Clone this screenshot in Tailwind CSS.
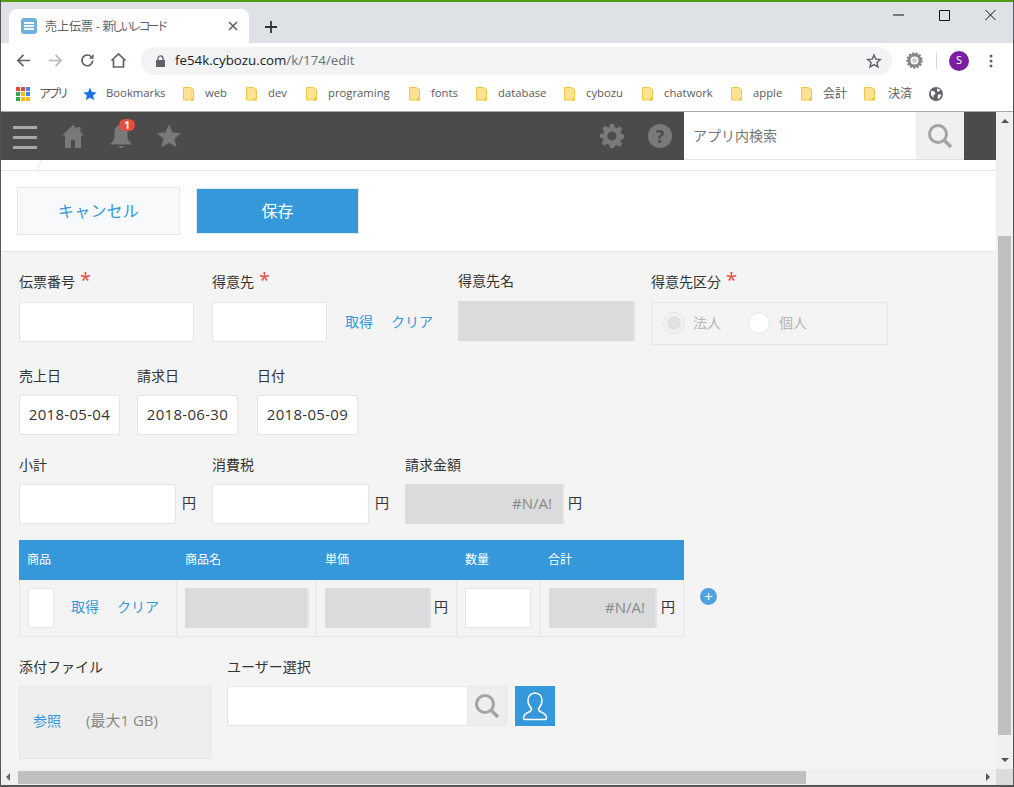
<!DOCTYPE html>
<html lang="ja">
<head>
    <meta charset="UTF-8">
    <title>売上伝票 - 新しいレコード</title>
    <script src="https://cdn.jsdelivr.net/npm/@tailwindcss/browser@4"></script>
</head>
<body class="w-[1014px] h-[787px] overflow-hidden flex flex-col bg-white text-[14px] text-[#333] font-['Open_Sans','Noto_Sans_CJK_JP',sans-serif] border-l border-r border-[#555]">
    <!-- Window title + tabs -->
    <div class="h-[43px] shrink-0 bg-[#dee1e6] border-t-2 border-[#4f9a10] flex items-end relative">
        <div class="ml-[8px] w-[240px] h-[34px] bg-white rounded-t-[8px] flex items-center pl-[12px] pr-[11px]">
            <div class="w-[16px] h-[16px] rounded-[3px] bg-[#6fb1de] flex flex-col justify-center gap-[1px] px-[3px]">
                <div class="h-[2px] bg-white/90"></div>
                <div class="h-[2px] bg-white/90"></div>
                <div class="h-[2px] bg-white/90"></div>
            </div>
            <span class="ml-[8px] text-[12px] text-[#5f5f5f] font-['Noto_Sans_CJK_JP',sans-serif]">売上伝票 - <span class="tracking-[-3px]">新しいレコード</span></span>
            <svg class="ml-auto w-[10px] h-[10px]" viewBox="0 0 10 10"><path d="M1 1l8 8M9 1l-8 8" stroke="#5f6368" stroke-width="1.6"/></svg>
        </div>
        <svg class="ml-[15px] mb-[9px] w-[14px] h-[14px]" viewBox="0 0 14 14"><path d="M7 1v12M1 7h12" stroke="#333" stroke-width="1.8"/></svg>
        <div class="ml-auto self-start mt-[5px] mr-[17px] flex items-center gap-[35px]">
            <svg class="w-[11px] h-[16px]" viewBox="0 0 11 16"><path d="M0 8h11" stroke="#111" stroke-width="1"/></svg>
            <svg class="w-[11px] h-[16px]" viewBox="0 0 11 16"><path d="M.5 3.5h10v10H.5z" fill="none" stroke="#111" stroke-width="1"/></svg>
            <svg class="w-[11px] h-[16px]" viewBox="0 0 11 16"><path d="M.5 3l10 10M10.5 3l-10 10" stroke="#111" stroke-width="1"/></svg>
        </div>
    </div>

    <!-- Address bar -->
    <div class="h-[35px] shrink-0 bg-white flex items-center pl-[15px]">
        <svg class="w-[15px] h-[15px]" viewBox="0 0 16 16"><path d="M15 8H2M8 2L2 8l6 6" fill="none" stroke="#5f6368" stroke-width="1.8"/></svg>
        <svg class="ml-[17px] w-[15px] h-[15px]" viewBox="0 0 16 16"><path d="M1 8h13M8 2l6 6-6 6" fill="none" stroke="#b5b8bc" stroke-width="1.8"/></svg>
        <svg class="ml-[17px] w-[15px] h-[15px]" viewBox="0 0 16 16"><path d="M13.5 8A5.7 5.7 0 1 1 12 4" fill="none" stroke="#5f6368" stroke-width="1.8"/><path d="M14.5 1v5h-5z" fill="#5f6368"/></svg>
        <svg class="ml-[15px] w-[17px] h-[17px]" viewBox="0 0 17 17"><path d="M1.5 8.5L8.500 2l7 6.500M3.500 7.500V15h10V7.500" fill="none" stroke="#5f6368" stroke-width="1.7"/></svg>
        <div class="ml-[14px] w-[751px] h-[28px] bg-[#f1f3f4] rounded-full flex items-center pl-[14px] pr-[10px]">
            <svg class="w-[11px] h-[12px]" viewBox="0 0 11 12"><path d="M1 5h9v7H1z" fill="#5f6368"/><path d="M3 5V3.400a2.500 2.500 0 0 1 5 0V5" fill="none" stroke="#5f6368" stroke-width="1.3"/></svg>
            <span class="ml-[9px] text-[13.3px] text-[#202124]">fe54k.cybozu.com<span class="text-[#6b6f73]">/k/174/edit</span></span>
            <svg class="ml-auto w-[16px] h-[16px]" viewBox="0 0 24 24"><path d="M12 3l2.700 6.200 6.800.6-5.100 4.500 1.500 6.600L12 17.400l-5.900 3.500 1.500-6.600-5.100-4.500 6.800-.6z" fill="none" stroke="#5f6368" stroke-width="2.2"/></svg>
        </div>
        <svg class="ml-[14px] w-[17px] h-[17px]" viewBox="0 0 17 17"><circle cx="8.500" cy="8.500" r="5.500" fill="none" stroke="#888" stroke-width="3"/><circle cx="8.500" cy="8.500" r="7.400" fill="none" stroke="#777" stroke-width="1.6" stroke-dasharray="2 1.6"/><circle cx="8.500" cy="8.500" r="2.400" fill="#ccc"/></svg>
        <div class="ml-[13px] w-px h-[16px] bg-[#d5d7da]"></div>
        <div class="ml-[12px] w-[20px] h-[20px] rounded-full bg-[#7b1fa2] text-white text-[11px] flex items-center justify-center">S</div>
        <svg class="ml-[20px] w-[4px] h-[14px]" viewBox="0 0 4 14"><circle cx="2" cy="2" r="1.5" fill="#5f6368"/><circle cx="2" cy="7" r="1.5" fill="#5f6368"/><circle cx="2" cy="12" r="1.5" fill="#5f6368"/></svg>
    </div>

    <!-- Bookmarks -->
    <div class="h-[34px] shrink-0 bg-white border-b border-[#a8a8a8] flex items-center pl-[15px] pb-[2px] text-[11.3px] text-[#5a5a5a]">
        <div class="grid grid-cols-3 gap-[1px] w-[14px] h-[14px]">
            <i class="bg-[#ea4335]"></i><i class="bg-[#ea4335]"></i><i class="bg-[#4285f4]"></i>
            <i class="bg-[#34a853]"></i><i class="bg-[#fbbc05]"></i><i class="bg-[#4285f4]"></i>
            <i class="bg-[#34a853]"></i><i class="bg-[#fbbc05]"></i><i class="bg-[#fbbc05]"></i>
        </div>
        <span class="ml-[9px] w-[26px] text-[12px] tracking-[-3px] whitespace-nowrap">アプリ</span>
        <svg class="ml-[18px] w-[14px] h-[14px]" viewBox="0 0 24 24"><path d="M12 1l3.300 7.600 8.200.7-6.200 5.400 1.900 8.100L12 18.500l-7.200 4.300 1.900-8.100L.5 9.300l8.200-.7z" fill="#1a73e8"/></svg>
        <span class="ml-[9px] w-[59px]">Bookmarks</span>
        <svg class="ml-[18px] w-[11px] h-[14px]" viewBox="0 0 11 14"><path d="M.5.5h7l3 2v10.500H.5z" fill="#fde293" stroke="#f1c644"/><path d="M8 11h2.500v2.500H8z" fill="#f1c644"/></svg>
        <span class="ml-[11px] w-[22px]">web</span>
        <svg class="ml-[19px] w-[11px] h-[14px]" viewBox="0 0 11 14"><path d="M.5.5h7l3 2v10.500H.5z" fill="#fde293" stroke="#f1c644"/><path d="M8 11h2.500v2.500H8z" fill="#f1c644"/></svg>
        <span class="ml-[11px] w-[19px]">dev</span>
        <svg class="ml-[19px] w-[11px] h-[14px]" viewBox="0 0 11 14"><path d="M.5.5h7l3 2v10.500H.5z" fill="#fde293" stroke="#f1c644"/><path d="M8 11h2.500v2.500H8z" fill="#f1c644"/></svg>
        <span class="ml-[11px] w-[63px]">programing</span>
        <svg class="ml-[18px] w-[11px] h-[14px]" viewBox="0 0 11 14"><path d="M.5.5h7l3 2v10.500H.5z" fill="#fde293" stroke="#f1c644"/><path d="M8 11h2.500v2.500H8z" fill="#f1c644"/></svg>
        <span class="ml-[11px] w-[27px]">fonts</span>
        <svg class="ml-[18px] w-[11px] h-[14px]" viewBox="0 0 11 14"><path d="M.5.5h7l3 2v10.500H.5z" fill="#fde293" stroke="#f1c644"/><path d="M8 11h2.500v2.500H8z" fill="#f1c644"/></svg>
        <span class="ml-[11px] w-[48px]">database</span>
        <svg class="ml-[18px] w-[11px] h-[14px]" viewBox="0 0 11 14"><path d="M.5.5h7l3 2v10.500H.5z" fill="#fde293" stroke="#f1c644"/><path d="M8 11h2.500v2.500H8z" fill="#f1c644"/></svg>
        <span class="ml-[11px] w-[37px]">cybozu</span>
        <svg class="ml-[19px] w-[11px] h-[14px]" viewBox="0 0 11 14"><path d="M.5.5h7l3 2v10.500H.5z" fill="#fde293" stroke="#f1c644"/><path d="M8 11h2.500v2.500H8z" fill="#f1c644"/></svg>
        <span class="ml-[11px] w-[49px]">chatwork</span>
        <svg class="ml-[18px] w-[11px] h-[14px]" viewBox="0 0 11 14"><path d="M.5.5h7l3 2v10.500H.5z" fill="#fde293" stroke="#f1c644"/><path d="M8 11h2.500v2.500H8z" fill="#f1c644"/></svg>
        <span class="ml-[11px] w-[30px]">apple</span>
        <svg class="ml-[18px] w-[11px] h-[14px]" viewBox="0 0 11 14"><path d="M.5.5h7l3 2v10.500H.5z" fill="#fde293" stroke="#f1c644"/><path d="M8 11h2.500v2.500H8z" fill="#f1c644"/></svg>
        <span class="ml-[11px] w-[24px] text-[12px]">会計</span>
        <svg class="ml-[17px] w-[11px] h-[14px]" viewBox="0 0 11 14"><path d="M.5.5h7l3 2v10.500H.5z" fill="#fde293" stroke="#f1c644"/><path d="M8 11h2.500v2.500H8z" fill="#f1c644"/></svg>
        <span class="ml-[13px] w-[24px] text-[12px]">決済</span>
        <svg class="ml-[17px] w-[14px] h-[14px]" viewBox="0 0 14 14"><circle cx="7" cy="7" r="7" fill="#5f6368"/><path d="M2 3.500l3.500 1 1 2.500-2 1v3L2 8zM8 1.500l3.500 1-1.500 2H8zM9 7.500h3.500l-2 4H8.500z" fill="#fff"/></svg>
    </div>

    <!-- Page + scrollbars -->
    <div class="flex-1 flex min-h-0">
        <div class="flex-1 flex flex-col min-w-0">
            <!-- kintone header -->
            <div class="h-[48px] shrink-0 bg-[#4b4b4b] flex items-center pl-[12px]">
                <div class="flex flex-col gap-[7px] mt-[2px]">
                    <div class="w-[24px] h-[3px] bg-[#a8a8a8]"></div>
                    <div class="w-[24px] h-[3px] bg-[#a8a8a8]"></div>
                    <div class="w-[24px] h-[3px] bg-[#a8a8a8]"></div>
                </div>
                <svg class="ml-[24px] w-[24px] h-[24px]" viewBox="0 0 24 24"><path d="M12 1L1 11.500h3V24h6v-8h4v8h6V11.500h3l-3.500-3.400V3h-3v2.200z" fill="#797979"/></svg>
                <div class="relative ml-[23px] w-[26px] h-[26px]">
                    <svg class="w-[26px] h-[26px]" viewBox="0 0 26 26"><path d="M13 2c-4 0-6.500 3-6.500 7v5c0 3-2 5-4 6.500v1h21v-1c-2-1.500-4-3.500-4-6.500V9c0-4-2.500-7-6.500-7z" fill="#797979"/><path d="M10.500 23h5a2.500 2 0 0 1-5 0z" fill="#797979"/></svg>
                    <span class="absolute -top-[4px] left-[11px] w-[16px] h-[12px] rounded-full bg-[#e74c3c] text-white text-[10px] leading-[12px] font-bold text-center">1</span>
                </div>
                <svg class="ml-[23px] w-[24px] h-[24px]" viewBox="0 0 24 24"><path d="M12 .5l3.500 8 8.500.7-6.500 5.600 2 8.400L12 18.700l-7.500 4.500 2-8.400L0 9.200l8.500-.7z" fill="#797979"/></svg>
                <svg class="ml-auto w-[24px] h-[24px]" viewBox="0 0 24 24"><path fill-rule="evenodd" d="M10 0h4l.7 3.300 2 .9L19.600 2.300l2.800 2.800-1.900 2.900.9 2 3.300.7v3.800l-3.300.7-.9 2 1.900 2.900-2.800 2.800-2.900-1.900-2 .9L14 24h-4l-.7-3.300-2-.9-2.900 1.900-2.800-2.800 1.900-2.900-.9-2L0 13.900v-3.800l3.300-.7.9-2-1.900-2.900 2.800-2.800 2.900 1.900 2-.9zM12 7.500a4.500 4.500 0 1 0 0 9 4.500 4.500 0 0 0 0-9z" fill="#797979"/></svg>
                <div class="ml-[24px] w-[24px] h-[24px] rounded-full bg-[#797979] text-[#4b4b4b] text-[18px] leading-[24px] font-bold text-center">?</div>
                <div class="ml-[12px] w-[280px] h-[48px] self-start bg-white border-b border-[#e3e3e3] flex items-center">
                    <span class="pl-[9px] text-[#777] font-['Noto_Sans_CJK_JP',sans-serif]">アプリ内検索</span>
                    <div class="ml-auto w-[48px] h-[47px] bg-[#f0f0f0] flex items-center justify-center">
                        <svg class="w-[26px] h-[26px]" viewBox="0 0 26 26"><circle cx="11" cy="11" r="8.500" fill="none" stroke="#a3a3a3" stroke-width="3"/><path d="M17 17l7 7" stroke="#a3a3a3" stroke-width="3.500"/></svg>
                    </div>
                </div>
                <div class="w-[32px]"></div>
            </div>

            <!-- Action bar -->
            <div class="h-[92px] shrink-0 bg-white border-b border-[#e3e7e8]">
                <div class="h-[11px] border-b border-[#e3e7e8] pl-[35px]">
                    <svg class="w-[6px] h-[10px]" viewBox="0 0 6 10"><path d="M5.500 0L.5 10" stroke="#e3e7e8"/></svg>
                </div>
                <div class="flex items-center pl-[16px] pt-[16px] gap-[16px]">
                    <button class="w-[163px] h-[48px] bg-[#f7f9fa] border border-[#e3e7e8] text-[#3498db] text-[16px] tracking-[.2px]">キャンセル</button>
                    <button class="w-[163px] h-[46px] bg-[#3498db] border border-[#e3e7e8] text-white text-[16px]">保存</button>
                </div>
            </div>

            <!-- Form -->
            <div class="flex-1 min-h-0 bg-[#f4f4f4] pl-[18px] pt-[18px] overflow-hidden">
                <div class="flex">
                    <div class="w-[193px]">
                        <div class="h-[21px] leading-[21px]">伝票番号<span class="ml-[5px] text-[#e74c3c] text-[20px] leading-[20px]">*</span></div>
                        <div class="mt-[11px] w-[175px] h-[40px] bg-white border border-[#e3e7e8]"></div>
                    </div>
                    <div class="w-[246px]">
                        <div class="h-[21px] leading-[21px]">得意先<span class="ml-[5px] text-[#e74c3c] text-[20px] leading-[20px]">*</span></div>
                        <div class="mt-[11px] flex items-center">
                            <div class="w-[115px] h-[40px] bg-white border border-[#e3e7e8]"></div>
                            <span class="ml-[18px] mb-[2px] text-[#3498db]">取得</span>
                            <span class="ml-[18px] mb-[2px] text-[#3498db]">クリア</span>
                        </div>
                    </div>
                    <div class="w-[193px]">
                        <div class="h-[21px] leading-[21px]">得意先名</div>
                        <div class="mt-[10px] w-[177px] h-[40px] bg-[#dadbdd] border-r-2 border-[#e3e3e3]"></div>
                    </div>
                    <div>
                        <div class="h-[21px] leading-[21px]">得意先区分<span class="ml-[5px] text-[#e74c3c] text-[20px] leading-[20px]">*</span></div>
                        <div class="mt-[11px] w-[237px] h-[43px] border border-[#e3e7e8] flex items-center pl-[12px] pb-[2px] text-[#b5b5b5]">
                            <div class="w-[20px] h-[20px] rounded-full bg-[#dfe3e5] border-[3px] border-[#f2f2f2] outline outline-[#e3e3e3]"></div>
                            <span class="ml-[9px]">法人</span>
                            <div class="ml-[28px] w-[20px] h-[20px] rounded-full bg-white outline outline-[#e8e8e8]"></div>
                            <span class="ml-[10px]">個人</span>
                        </div>
                    </div>
                </div>

                <div class="mt-[20px] flex">
                    <div class="w-[101px]">
                        <div class="h-[21px] leading-[21px]">売上日</div>
                        <div class="mt-[9px] h-[40px] bg-white border border-[#e3e7e8] flex items-center justify-center pb-[2px] text-[15px] tracking-[.3px]">2018-05-04</div>
                    </div>
                    <div class="ml-[17px] w-[101px]">
                        <div class="h-[21px] leading-[21px]">請求日</div>
                        <div class="mt-[9px] h-[40px] bg-white border border-[#e3e7e8] flex items-center justify-center pb-[2px] text-[15px] tracking-[.3px]">2018-06-30</div>
                    </div>
                    <div class="ml-[19px] w-[101px]">
                        <div class="h-[21px] leading-[21px]">日付</div>
                        <div class="mt-[9px] h-[40px] bg-white border border-[#e3e7e8] flex items-center justify-center pb-[2px] text-[15px] tracking-[.3px]">2018-05-09</div>
                    </div>
                </div>

                <div class="mt-[19px] flex">
                    <div class="w-[193px]">
                        <div class="h-[21px] leading-[21px]">小計</div>
                        <div class="mt-[9px] flex items-center">
                            <div class="w-[157px] h-[40px] bg-white border border-[#e3e7e8]"></div>
                            <span class="ml-[6px] mb-[4px]">円</span>
                        </div>
                    </div>
                    <div class="w-[193px]">
                        <div class="h-[21px] leading-[21px]">消費税</div>
                        <div class="mt-[9px] flex items-center">
                            <div class="w-[157px] h-[40px] bg-white border border-[#e3e7e8]"></div>
                            <span class="ml-[6px] mb-[4px]">円</span>
                        </div>
                    </div>
                    <div>
                        <div class="h-[21px] leading-[21px]">請求金額</div>
                        <div class="mt-[9px] flex items-center">
                            <div class="w-[159px] h-[40px] bg-[#dadbdd] border-r-2 border-[#e3e3e3] flex items-center justify-end pr-[10px] pb-[2px] text-[15px] text-[#888]">#N/A!</div>
                            <span class="ml-[4px] mb-[4px]">円</span>
                        </div>
                    </div>
                </div>

                <!-- Table -->
                <div class="mt-[16px] flex items-start">
                    <div class="w-[665px]">
                        <div class="h-[40px] bg-[#3498db] text-white text-[12px] flex items-center">
                            <div class="w-[157px] pl-[8px]">商品</div>
                            <div class="w-[140px] pl-[9px]">商品名</div>
                            <div class="w-[140px] pl-[9px]">単価</div>
                            <div class="w-[84px] pl-[9px]">数量</div>
                            <div class="pl-[8px]">合計</div>
                        </div>
                        <div class="h-[57px] flex border-l border-r border-b border-[#e3e7e8] text-[14px]">
                            <div class="w-[157px] border-r border-[#e3e7e8] flex items-center pl-[8px]">
                                <div class="w-[26px] h-[40px] bg-white border border-[#e3e7e8]"></div>
                                <span class="ml-[17px] mb-[4px] text-[#3498db]">取得</span>
                                <span class="ml-[18px] mb-[4px] text-[#3498db]">クリア</span>
                            </div>
                            <div class="w-[140px] border-r border-[#e3e7e8] flex items-center pl-[8px]">
                                <div class="w-[124px] h-[40px] bg-[#dadbdd] border-r-2 border-[#e3e3e3]"></div>
                            </div>
                            <div class="w-[140px] border-r border-[#e3e7e8] flex items-center pl-[8px]">
                                <div class="w-[106px] h-[40px] bg-[#dadbdd] border-r-2 border-[#e3e3e3]"></div>
                                <span class="ml-[3px] mb-[4px]">円</span>
                            </div>
                            <div class="w-[84px] border-r border-[#e3e7e8] flex items-center pl-[8px]">
                                <div class="w-[66px] h-[40px] bg-white border border-[#e3e7e8]"></div>
                            </div>
                            <div class="flex items-center pl-[8px]">
                                <div class="w-[108px] h-[40px] bg-[#dadbdd] border-r-2 border-[#e3e3e3] flex items-center justify-end pr-[10px] pb-[2px] text-[15px] text-[#888]">#N/A!</div>
                                <span class="ml-[4px] mb-[4px]">円</span>
                            </div>
                        </div>
                    </div>
                    <div class="ml-[16px] mt-[48px] w-[17px] h-[17px] rounded-full bg-[#4fa3e0] text-white text-[15px] leading-[16px] text-center">+</div>
                </div>

                <!-- Attachments, user picker -->
                <div class="mt-[19px] flex">
                    <div class="w-[208px]">
                        <div class="h-[21px] leading-[21px]">添付ファイル</div>
                        <div class="mt-[9px] w-[192px] h-[73px] bg-[#eeeeee] border border-[#e3e7e8] flex items-center pl-[13px] pb-[4px]">
                            <span class="text-[#3498db]">参照</span>
                            <span class="ml-[25px] text-[15px] text-[#888]">(最大1 GB)</span>
                        </div>
                    </div>
                    <div>
                        <div class="h-[21px] leading-[21px]">ユーザー選択</div>
                        <div class="mt-[9px] flex">
                            <div class="w-[241px] h-[40px] bg-white border border-[#e3e7e8]"></div>
                            <div class="w-[39px] h-[40px] bg-[#eeeeee] border border-l-0 border-[#e3e7e8] flex items-center justify-center">
                                <svg class="w-[26px] h-[26px]" viewBox="0 0 26 26"><circle cx="11" cy="11" r="8.500" fill="none" stroke="#a3a3a3" stroke-width="3"/><path d="M17 17l7 7" stroke="#a3a3a3" stroke-width="3.500"/></svg>
                            </div>
                            <div class="ml-[8px] w-[40px] h-[40px] bg-[#3498db] flex items-center justify-center">
                                <svg class="w-[32px] h-[32px]" viewBox="0 0 32 32"><path d="M16 3c-4.500 0-7 3.500-7 7.500 0 3.500 1.500 6 3.500 8 0 2-1 3-3 3.800C6.500 23.500 4.500 25 4.500 28c0 1 .5 1.500 1.500 1.500h20c1 0 1.500-.5 1.500-1.500 0-3-2-4.500-5-5.700-2-.8-3-1.800-3-3.800 2-2 3.500-4.500 3.500-8C23 6.500 20.500 3 16 3z" fill="none" stroke="#fff" stroke-width="1.500"/></svg>
                            </div>
                        </div>
                    </div>
                </div>
            </div>

            <!-- Horizontal scrollbar -->
            <div class="h-[16px] shrink-0 bg-[#f0f0f0] flex items-center pr-[6px]">
                <div class="w-0 h-0 ml-[5px] border-y-[4px] border-y-transparent border-r-[4px] border-r-[#666]"></div>
                <div class="ml-[8px] mt-[1px] w-[788px] h-[13px] bg-[#c0c0c0]"></div>
                <div class="ml-auto w-0 h-0 border-y-[4px] border-y-transparent border-l-[4px] border-l-[#555]"></div>
            </div>
        </div>

        <!-- Vertical scrollbar -->
        <div class="w-[17px] shrink-0 bg-[#f0f0f0] flex flex-col items-center">
            <div class="mt-[7px] w-0 h-0 border-x-[4px] border-x-transparent border-b-[4px] border-b-[#555]"></div>
            <div class="mt-[113px] w-[13px] h-[499px] bg-[#c0c0c0]"></div>
            <div class="mt-[23px] w-0 h-0 border-x-[4px] border-x-transparent border-t-[4px] border-t-[#555]"></div>
            <div class="mt-auto w-full h-[16px] bg-[#dcdcdc]"></div>
        </div>
    </div>
    <div class="h-[2px] shrink-0 bg-[#555]"></div>
</body>
</html>
